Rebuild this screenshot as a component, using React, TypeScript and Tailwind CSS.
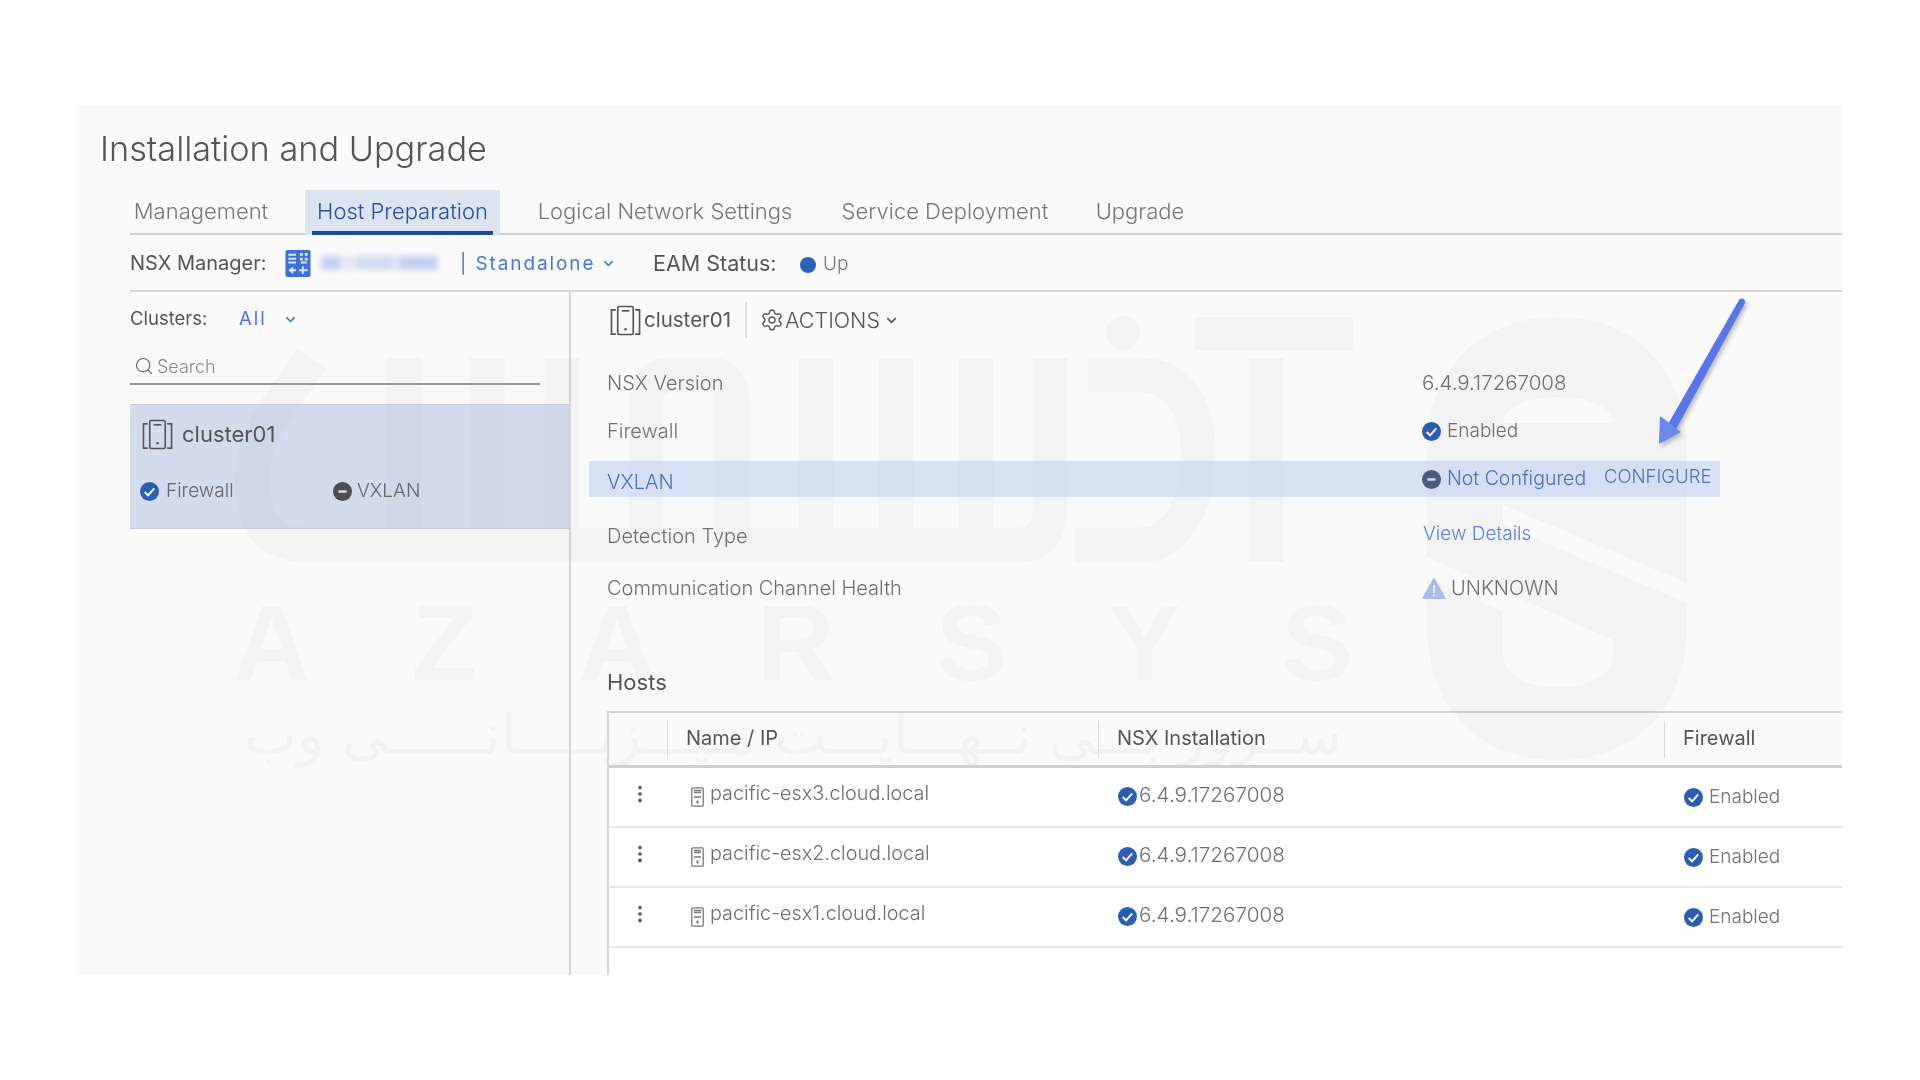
import React from "react";
import { ChevronDown, EllipsisVertical, Search, Settings } from "lucide-react";

const tabs = [
  { label: "Management", cls: "w-[142px] text-[#777]" },
  { label: "Host Preparation", cls: "w-[195px] ml-[33px] bg-[#dbe4f0] text-[#27509f]", active: true },
  { label: "Logical Network Settings", cls: "w-[300px] ml-[15px] text-[#777]" },
  { label: "Service Deployment", cls: "w-[240px] ml-[10px] text-[#777]" },
  { label: "Upgrade", cls: "w-[110px] ml-[20px] text-[#777]" },
];

const hosts = ["pacific-esx3.cloud.local", "pacific-esx2.cloud.local", "pacific-esx1.cloud.local"];

const CheckIcon = ({ className = "w-[19px] h-[19px]" }: { className?: string }) => (
  <svg viewBox="0 0 20 20" className={`${className} shrink-0`}>
    <circle cx="10" cy="10" r="10" fill="#2b5eb3" />
    <path d="M5 10.5l3.5 3.5L15 6.8" fill="none" stroke="#fff" strokeWidth="2" />
  </svg>
);

const MinusIcon = ({ fill = "#4a4e55" }: { fill?: string }) => (
  <svg viewBox="0 0 20 20" className="w-[19px] h-[19px] shrink-0">
    <circle cx="10" cy="10" r="10" fill={fill} />
    <rect x="5.5" y="8.7" width="9" height="2.6" rx="1" fill="#d5d9e2" />
  </svg>
);

const ClusterIcon = () => (
  <svg viewBox="0 0 32 32" className="w-[31px] h-[31px] shrink-0" fill="none" stroke="#555" strokeWidth="1.7">
    <path d="M6 5H1.5v25H6M26 5h4.5v25H26" />
    <rect x="8" y="1.5" width="16" height="29" rx="1.5" />
    <path d="M12 6h8" />
    <circle cx="16" cy="25" r="1.3" fill="#555" stroke="none" />
  </svg>
);

const ServerIcon = () => (
  <svg viewBox="0 0 13 20" className="w-[13px] h-[20px] shrink-0" fill="none" stroke="#777" strokeWidth="1.3">
    <rect x="0.8" y="0.8" width="11.4" height="18.4" rx="1" />
    <path d="M3 3.5h7M3 5.5h7M3 10h7" />
    <rect x="5.5" y="13.5" width="2" height="3" fill="#777" stroke="none" />
  </svg>
);

const NsxIcon = () => (
  <svg viewBox="0 0 26 28" className="w-[26px] h-[27px] shrink-0 translate-y-[1px]">
    <rect width="26" height="28" rx="2" fill="#3f70d9" />
    <path d="M3 4h8v2H3zM3 8h8v2H3zM3 12h8v2H3zM15 3h3v3h-3zM20 3h3v3h-3zM15 8h3v3h-3zM20 8h3v3h-3zM16 12h6v2h-6z" fill="#dbe6fb" />
    <path d="M3 21l5-4v3h3v2H8v3zM14 20h3v-3h2v3h4v2h-4v3h-2v-3h-3z" fill="#dbe6fb" />
  </svg>
);

const Watermark = () => (
  <svg viewBox="76 105 1766 870" className="absolute inset-0 w-[1766px] h-[870px]">
    <g fill="none" stroke="#f3f3f3" strokeWidth="35">
      <path d="M312 358C285 400 252 430 252 480C252 525 270 545 310 545H1020C1040 545 1050 530 1050 510V358" />
      <path d="M404 358V545M487 358V545M562 358V545M816 358V530M896 358V530M976 358V530" />
      <path d="M646 545V400C646 385 655 375 670 375H710C725 375 732 385 732 400V545" />
      <path d="M1088 375H1140C1180 375 1198 410 1198 450C1198 500 1180 545 1140 545H1075" />
      <path d="M1266 358V562" />
    </g>
    <circle cx="1123" cy="333" r="17" fill="#f3f3f3" />
    <rect x="1195" y="317" width="158" height="33" fill="#f3f3f3" />
    <path d="M1427 450C1427 370 1480 317 1557 317C1634 317 1687 370 1687 450V625C1687 710 1634 760 1557 760C1480 760 1427 710 1427 625Z" fill="#f3f3f3" />
    <path d="M1503 423C1503 408 1525 397 1558 397C1591 397 1613 408 1613 423Z" fill="#fafafa" />
    <path d="M1503 505L1687 583V603L1503 525Z" fill="#fafafa" />
    <path d="M1427 557L1613 640V655C1613 675 1590 687 1558 687C1526 687 1503 675 1503 655V612L1427 578Z" fill="#fafafa" />
  </svg>
);

const Arrow = () => (
  <svg viewBox="76 105 1766 870" className="absolute inset-0 w-[1766px] h-[870px] z-20 pointer-events-none drop-shadow-[2px_3px_2px_rgba(0,0,0,0.25)]">
    <path d="M1739 300C1741 297 1746 299 1745 303L1675 431L1667 426Z" fill="#5676ea" />
    <path d="M1659 444L1660 416L1681 432Z" fill="#6a8aea" />
  </svg>
);

export default function App() {
  return (
    <div className="min-h-[1080px] bg-white pt-[105px] pl-[76px] font-['Inter',sans-serif] font-light">
      <div className="relative w-[1766px] h-[870px] bg-[#fafafa] overflow-hidden blur-[0.6px]">
        <Watermark />

        {/* Watermark lettering, behind the panels */}
        <div className="absolute left-[157px] top-[498px] w-[1120px] flex justify-between text-[107px] leading-[80px] text-[#f3f3f3] font-['Liberation_Sans',sans-serif] font-bold">
          {["A", "Z", "A", "R", "S", "Y", "S"].map((letter, i) => (
            <span key={i}>{letter}</span>
          ))}
        </div>
        <div dir="rtl" className="absolute left-[157px] top-[605px] w-[1120px] flex justify-center text-[56px] leading-[50px] text-[#f2f2f2] font-['DejaVu_Sans',sans-serif] whitespace-nowrap">
          ســرور بـــی نــهـــایـــت مـیـــزبـــــانــــــی وب
        </div>

        <Arrow />
        <div className="absolute inset-0 flex flex-col z-10">
          {/* Title */}
          <div className="h-[85px] pl-[24px] pt-[21px] text-[34.3px] leading-[46px] text-[#555] font-light">
            Installation and Upgrade
          </div>

          <div className="ml-[54px] flex flex-col flex-1 min-h-0">
            {/* Tabs */}
            <div className="flex h-[45px] border-b-2 border-[#d0d0d0] text-[22px]">
              {tabs.map((tab) => (
                <div key={tab.label} className={`${tab.cls} relative h-[45px] flex items-center justify-center pb-[3px]`}>
                  {tab.label}
                  {tab.active && (
                    <div className="absolute left-[7px] right-[7px] bottom-0 h-[4px] bg-[#1f4a9c]"></div>
                  )}
                </div>
              ))}
            </div>

            {/* NSX Manager bar */}
            <div className="flex items-center h-[57px] border-b-2 border-[#d8d8d8] text-[20px] text-[#555]">
              <span className="w-[155px] shrink-0 font-normal whitespace-nowrap">NSX Manager:</span>
              <NsxIcon />
              <div className="flex items-center gap-[3px] ml-[10px] w-[129px] shrink-0 blur-[3px]">
                <div className="w-[20px] h-[14px] bg-[#c3d0ef]"></div>
                <div className="w-[8px] h-[14px] bg-[#dbe3f5]"></div>
                <div className="w-[40px] h-[14px] bg-[#d0daf2]"></div>
                <div className="w-[40px] h-[14px] bg-[#c3d0ef]"></div>
              </div>
              <span className="ml-[10px] w-[136px] shrink-0 translate-y-[2px] text-[19px] text-[#4a76d8] font-normal tracking-[1.9px] whitespace-nowrap">| Standalone</span>
              <ChevronDown size={15} strokeWidth={2.4} className="ml-[5px] shrink-0 translate-y-[1px] text-[#4a76d8]" />
              <span className="ml-[37px] w-[147px] shrink-0 translate-y-[1px] text-[21.5px] font-normal whitespace-nowrap">EAM Status:</span>
              <div className="w-[16px] h-[16px] rounded-full bg-[#2d62b8] translate-y-[2px]"></div>
              <span className="ml-[7px] translate-y-[2px] text-[19px] text-[#777]">Up</span>
            </div>

            <div className="flex flex-1 min-h-0">
              {/* Left column */}
              <div className="w-[441px] shrink-0 border-r-2 border-[#d4d4d4] flex flex-col">
                <div className="flex items-center h-[54px] text-[18.5px]">
                  <span className="w-[109px] font-normal text-[#555]">Clusters:</span>
                  <span className="w-[44px] text-[#4a76d8] font-normal tracking-[2px]">All</span>
                  <ChevronDown size={15} strokeWidth={2.4} className="text-[#4a76d8]" />
                </div>
                <div className="flex items-center gap-[3px] w-[410px] h-[39px] pl-[4px] pt-[3px] border-b-2 border-[#999] text-[18px] text-[#888]">
                  <Search size={20} strokeWidth={1.4} className="text-[#666]" />
                  Search
                </div>
                <div className="mt-[19px] h-[125px] bg-[#a9bde0]/50 border-t border-b border-[#c6cbd6] flex flex-col">
                  <div className="flex items-center h-[56px] pl-[12px] pt-[3px]">
                    <ClusterIcon />
                    <span className="ml-[9px] text-[22px] font-normal text-[#555]">cluster01</span>
                  </div>
                  <div className="flex items-center h-[56px] pl-[10px] pt-[4px] text-[19px] text-[#666]">
                    <CheckIcon />
                    <span className="ml-[7px] w-[167px]">Firewall</span>
                    <MinusIcon />
                    <span className="ml-[5px]">VXLAN</span>
                  </div>
                </div>
              </div>

              {/* Right column */}
              <div className="flex-1 min-w-0 pl-[36px] flex flex-col text-[20px] text-[#6f6f6f]">
                <div className="flex items-center h-[56px] shrink-0 text-[#555]">
                  <div className="ml-[3px]"><ClusterIcon /></div>
                  <span className="ml-[3px] w-[101px] shrink-0 text-[20.5px] font-normal">cluster01</span>
                  <div className="w-[2px] h-[36px] bg-[#ddd]"></div>
                  <Settings size={24} strokeWidth={1.4} className="ml-[13px]" />
                  <span className="ml-[1px] text-[21.5px]">ACTIONS</span>
                  <ChevronDown size={15} strokeWidth={2.6} className="ml-[4px]" />
                </div>

                <div className="flex items-center h-[48px] mt-[11px]">
                  <span className="w-[815px] shrink-0">NSX Version</span>
                  <span className="text-[20.5px]">6.4.9.17267008</span>
                </div>
                <div className="flex items-center h-[48px]">
                  <span className="w-[815px] shrink-0">Firewall</span>
                  <CheckIcon />
                  <span className="ml-[6px] text-[19px]">Enabled</span>
                </div>
                <div className="flex items-center h-[36px] mt-[6px] -ml-[18px] w-[1131px] pl-[18px] bg-[#bfd3f2]/60 text-[#4a6fc8]">
                  <span className="w-[815px] shrink-0 translate-y-[3px]">VXLAN</span>
                  <MinusIcon fill="#4a5a80" />
                  <span className="ml-[6px] w-[157px] shrink-0 text-[19.5px] whitespace-nowrap">Not Configured</span>
                  <span className="-translate-y-[2px] text-[18.5px]">CONFIGURE</span>
                </div>
                <div className="flex items-center h-[48px] mt-[15px]">
                  <span className="w-[816px] shrink-0">Detection Type</span>
                  <span className="text-[#5b82dc] text-[19px] -translate-y-[2px]">View Details</span>
                </div>
                <div className="flex items-center h-[48px] mt-[4px]">
                  <span className="w-[815px] shrink-0">Communication Channel Health</span>
                  <svg viewBox="0 0 24 22" className="w-[24px] h-[22px] shrink-0">
                    <path d="M12 1L23.5 21.5H.5Z" fill="#adbcef" stroke="#adbcef" strokeLinejoin="round" />
                    <rect x="11" y="8" width="2" height="8" fill="#e8ecfb" />
                    <rect x="11" y="17.5" width="2" height="2" fill="#e8ecfb" />
                  </svg>
                  <span className="ml-[5px]">UNKNOWN</span>
                </div>
                <div className="flex items-center h-[40px] mt-[50px] text-[22px] font-normal text-[#555]">Hosts</div>

                {/* Hosts table */}
                <div className="mt-[9px] flex-1 min-h-0 flex flex-col border-l-2 border-[#d8d8d8]">
                  <div className="grid grid-cols-[58px_431px_566px_1fr] h-[57px] shrink-0 border-t-2 border-b-[3px] border-[#cfcfcf] items-center font-normal text-[#555]">
                    <div className="h-[37px]"></div>
                    <div className="h-[37px] border-l border-[#ddd] flex items-center pl-[18px] pb-[3px]">Name / IP</div>
                    <div className="h-[37px] border-l border-[#ddd] flex items-center pl-[18px] pb-[3px]">NSX Installation</div>
                    <div className="h-[37px] border-l border-[#ddd] flex items-center pl-[18px] pb-[3px]">Firewall</div>
                  </div>
                  {hosts.map((host) => (
                    <div key={host} className="grid grid-cols-[58px_431px_566px_1fr] h-[60px] shrink-0 border-b-2 border-[#e6e6e6] bg-white items-center">
                      <div className="flex justify-center pl-[4px] pb-[6px] text-[#555]">
                        <EllipsisVertical size={22} strokeWidth={2} />
                      </div>
                      <div className="flex items-center pl-[24px]">
                        <ServerIcon />
                        <span className="ml-[6px] -translate-y-[3px] text-[19.8px]">{host}</span>
                      </div>
                      <div className="flex items-center pl-[20px]">
                        <CheckIcon />
                        <span className="-translate-y-[2px] ml-[2px] text-[20.7px]">6.4.9.17267008</span>
                      </div>
                      <div className="flex items-center pl-[20px]">
                        <CheckIcon />
                        <span className="ml-[6px] text-[19px]">Enabled</span>
                      </div>
                    </div>
                  ))}
                  <div className="flex-1 bg-white"></div>
                </div>
              </div>
            </div>
          </div>
        </div>
      </div>
    </div>
  );
}
